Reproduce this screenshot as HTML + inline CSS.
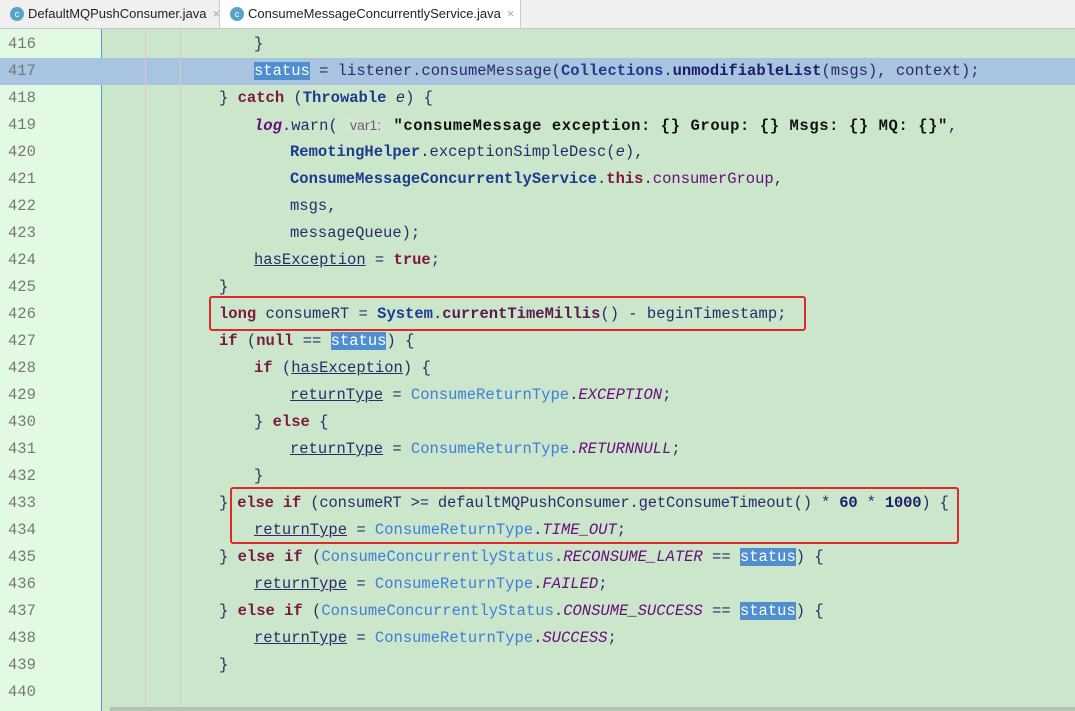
<!DOCTYPE html><html><head><meta charset="utf-8"><style>
body{margin:0;width:1075px;height:711px;overflow:hidden;background:#cce6cb;position:relative;font-family:"Liberation Mono",monospace;}
.tabs{position:absolute;left:0;top:0;width:1075px;height:28px;background:#f0f0f0;border-bottom:1px solid #c8c8c8;font-family:"Liberation Sans",sans-serif;font-size:13px;color:#222}
.tab{position:absolute;top:0;height:28px;line-height:28px;padding-left:28px;box-sizing:border-box}
.tab .ic{position:absolute;left:10px;top:7px;width:14px;height:14px;border-radius:50%;background:#5aa3c8;color:#fff;font-size:9px;line-height:14px;text-align:center}
.tab .x{color:#aaa;margin-left:6px}
.gut{position:absolute;left:0;top:29px;width:101px;height:682px;background:#e3fae2;border-right:1px solid #5a9bd5}
.ln{position:absolute;left:8px;font-size:15.5px;color:#777;height:27px;line-height:27px}
.guide{position:absolute;top:29px;width:1px;height:682px;background:#e2c6d8}
.l{position:absolute;font-size:15.5px;height:27px;line-height:27px;white-space:pre;color:#2b2b6b}
.hl{position:absolute;left:101px;width:974px;height:27px;background:#a8c4e0}
.k{color:#7a1a3e;font-weight:bold}
.c{color:#1d3b8f;font-weight:bold}
.cr{color:#3d7fd9}
.f{color:#660e7a;font-style:italic}
.s{color:#111;font-weight:bold}
.u{text-decoration:underline}
.sel{background:#4f8fd0;color:#fff}
.hint{background:#d4e4d4;color:#666;font-family:"Liberation Sans",sans-serif;font-size:14px;padding:0 3px;border-radius:3px}
.box{position:absolute;border:2px solid #e0282a;border-radius:3px}
</style></head><body>
<div class="tabs">
<div class="tab" style="left:0;width:219px;"><span class="ic">c</span>DefaultMQPushConsumer.java<span class="x">×</span></div>
<div class="tab" style="left:219px;width:302px;background:#fff;border-left:1px solid #ccc;border-right:1px solid #ccc;"><span class="ic">c</span>ConsumeMessageConcurrentlyService.java<span class="x">×</span></div>
</div>
<div class="gut"></div>
<div class="hl" style="top:58px"></div>
<div style="position:absolute;top:58px;left:0;width:101px;height:27px;background:#a8c4e0"></div>
<div class="guide" style="left:145px"></div><div class="guide" style="left:180px"></div>
<div style="position:absolute;left:110px;top:707px;width:965px;height:4px;background:#b0c4b0"></div>
<div class="ln" style="top:31px">416</div><div class="ln" style="top:58px">417</div><div class="ln" style="top:85px">418</div><div class="ln" style="top:112px">419</div><div class="ln" style="top:139px">420</div><div class="ln" style="top:166px">421</div><div class="ln" style="top:193px">422</div><div class="ln" style="top:220px">423</div><div class="ln" style="top:247px">424</div><div class="ln" style="top:274px">425</div><div class="ln" style="top:301px">426</div><div class="ln" style="top:328px">427</div><div class="ln" style="top:355px">428</div><div class="ln" style="top:382px">429</div><div class="ln" style="top:409px">430</div><div class="ln" style="top:436px">431</div><div class="ln" style="top:463px">432</div><div class="ln" style="top:490px">433</div><div class="ln" style="top:517px">434</div><div class="ln" style="top:544px">435</div><div class="ln" style="top:571px">436</div><div class="ln" style="top:598px">437</div><div class="ln" style="top:625px">438</div><div class="ln" style="top:652px">439</div><div class="ln" style="top:679px">440</div>

<div class="l" style="top:31px;left:254px">}</div>
<div class="l" style="top:58px;left:254px"><span class="sel">status</span> = listener.consumeMessage(<span class="c">Collections</span>.<span class="s" style="color:#1d1d6b">unmodifiableList</span>(msgs), context);</div>
<div class="l" style="top:85px;left:219px">} <span class="k">catch</span> (<span class="c">Throwable</span> <i>e</i>) {</div>
<div class="l" style="top:112px;left:254px"><span class="f" style="font-weight:bold">log</span>.warn( <span class="hint">var1:</span> <span class="s" style="letter-spacing:0.6px">"consumeMessage exception: {} Group: {} Msgs: {} MQ: {}"</span>,</div>
<div class="l" style="top:139px;left:290px"><span class="c">RemotingHelper</span>.exceptionSimpleDesc(<i>e</i>),</div>
<div class="l" style="top:166px;left:290px"><span class="c">ConsumeMessageConcurrentlyService</span>.<span class="k">this</span>.<span style="color:#660e7a">consumerGroup</span>,</div>
<div class="l" style="top:193px;left:290px">msgs,</div>
<div class="l" style="top:220px;left:290px">messageQueue);</div>
<div class="l" style="top:247px;left:254px"><span class="u">hasException</span> = <span class="k">true</span>;</div>
<div class="l" style="top:274px;left:219px">}</div>
<div class="l" style="top:301px;left:219px"><span class="k">long</span> consumeRT = <span class="c">System</span>.<span class="s" style="color:#5a1a4e">currentTimeMillis</span>() - beginTimestamp;</div>
<div class="l" style="top:328px;left:219px"><span class="k">if</span> (<span class="k">null</span> == <span class="sel">status</span>) {</div>
<div class="l" style="top:355px;left:254px"><span class="k">if</span> (<span class="u">hasException</span>) {</div>
<div class="l" style="top:382px;left:290px"><span class="u">returnType</span> = <span class="cr">ConsumeReturnType</span>.<span class="f">EXCEPTION</span>;</div>
<div class="l" style="top:409px;left:254px">} <span class="k">else</span> {</div>
<div class="l" style="top:436px;left:290px"><span class="u">returnType</span> = <span class="cr">ConsumeReturnType</span>.<span class="f">RETURNNULL</span>;</div>
<div class="l" style="top:463px;left:254px">}</div>
<div class="l" style="top:490px;left:219px;letter-spacing:-0.18px">} <span class="k">else if</span> (consumeRT &gt;= defaultMQPushConsumer.getConsumeTimeout() * <span class="s" style="color:#1d1d6b">60</span> * <span class="s" style="color:#1d1d6b">1000</span>) {</div>
<div class="l" style="top:517px;left:254px"><span class="u">returnType</span> = <span class="cr">ConsumeReturnType</span>.<span class="f">TIME_OUT</span>;</div>
<div class="l" style="top:544px;left:219px">} <span class="k">else if</span> (<span class="cr">ConsumeConcurrentlyStatus</span>.<span class="f">RECONSUME_LATER</span> == <span class="sel">status</span>) {</div>
<div class="l" style="top:571px;left:254px"><span class="u">returnType</span> = <span class="cr">ConsumeReturnType</span>.<span class="f">FAILED</span>;</div>
<div class="l" style="top:598px;left:219px">} <span class="k">else if</span> (<span class="cr">ConsumeConcurrentlyStatus</span>.<span class="f">CONSUME_SUCCESS</span> == <span class="sel">status</span>) {</div>
<div class="l" style="top:625px;left:254px"><span class="u">returnType</span> = <span class="cr">ConsumeReturnType</span>.<span class="f">SUCCESS</span>;</div>
<div class="l" style="top:652px;left:219px">}</div>

<div class="box" style="left:209px;top:296px;width:593px;height:31px"></div>
<div class="box" style="left:230px;top:487px;width:725px;height:53px"></div>
</body></html>
